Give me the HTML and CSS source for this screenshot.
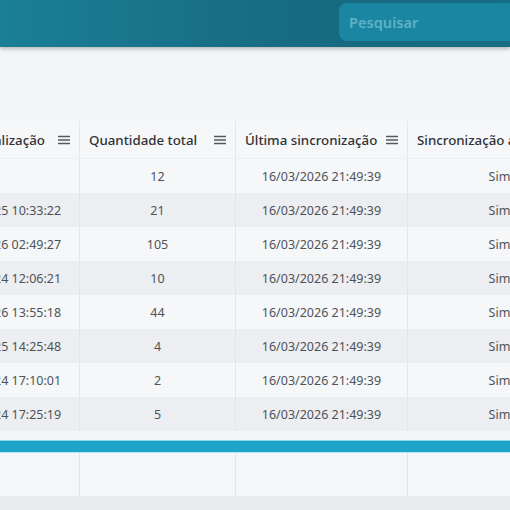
FILE: index.html
```html
<!DOCTYPE html>
<html lang="pt-BR">
<head>
<meta charset="utf-8">
<link rel="stylesheet" href="styles.css">
</head>
<body>
<header class="topbar">
  <div class="search"><span class="placeholder">Pesquisar</span></div>
</header>
<main class="content">
  <div class="grid">
    <div class="row head">
      <div class="hcell hcell-end"><span>Última atualização</span><svg class="menu" viewBox="0 0 14 10"><path d="M1 1.5H13M1 5H13M1 8.5H13"/></svg></div>
      <div class="hcell"><span>Quantidade total</span><svg class="menu" viewBox="0 0 14 10"><path d="M1 1.5H13M1 5H13M1 8.5H13"/></svg></div>
      <div class="hcell"><span>Última sincronização</span><svg class="menu" viewBox="0 0 14 10"><path d="M1 1.5H13M1 5H13M1 8.5H13"/></svg></div>
      <div class="hcell"><span>Sincronização ativa</span><svg class="menu" viewBox="0 0 14 10"><path d="M1 1.5H13M1 5H13M1 8.5H13"/></svg></div>
    </div>
    <div class="row odd"><div class="cell"></div><div class="cell">12</div><div class="cell">16/03/2026 21:49:39</div><div class="cell">Sim</div></div>
    <div class="row even"><div class="cell">12/08/2025 10:33:22</div><div class="cell">21</div><div class="cell">16/03/2026 21:49:39</div><div class="cell">Sim</div></div>
    <div class="row odd"><div class="cell">14/03/2026 02:49:27</div><div class="cell">105</div><div class="cell">16/03/2026 21:49:39</div><div class="cell">Sim</div></div>
    <div class="row even"><div class="cell">21/11/2024 12:06:21</div><div class="cell">10</div><div class="cell">16/03/2026 21:49:39</div><div class="cell">Sim</div></div>
    <div class="row odd"><div class="cell">02/02/2026 13:55:18</div><div class="cell">44</div><div class="cell">16/03/2026 21:49:39</div><div class="cell">Sim</div></div>
    <div class="row even"><div class="cell">19/06/2025 14:25:48</div><div class="cell">4</div><div class="cell">16/03/2026 21:49:39</div><div class="cell">Sim</div></div>
    <div class="row odd"><div class="cell">08/10/2024 17:10:01</div><div class="cell">2</div><div class="cell">16/03/2026 21:49:39</div><div class="cell">Sim</div></div>
    <div class="row even"><div class="cell">27/09/2024 17:25:19</div><div class="cell">5</div><div class="cell">16/03/2026 21:49:39</div><div class="cell">Sim</div></div>
    <div class="spacer"></div>
    <div class="scrollbar"></div>
    <div class="row foot"><div class="cell"></div><div class="cell"></div><div class="cell"></div><div class="cell"></div></div>
  </div>
</main>
</body>
</html>
```
FILE: styles.css
```css
html, body {
  margin: 0;
  padding: 0;
  height: 100%;
  overflow: hidden;
  background: #e9ebed;
  font-family: "Noto Sans", "Open Sans", sans-serif;
}
.topbar {
  height: 47px;
  background: linear-gradient(90deg, #1b7f96 0%, #176d84 50%, #166a80 70%, #176d84 100%);
  box-shadow: 0 2px 4px rgba(0,0,0,0.25);
  display: flex;
  justify-content: flex-end;
  align-items: center;
  position: relative;
  z-index: 2;
}
.search {
  width: 190px;
  margin-right: -19px;
  height: 38px;
  margin-top: -4px;
  background: #1a86a2;
  border-radius: 8px;
  display: flex;
  align-items: center;
  padding-left: 10px;
  box-sizing: border-box;
}
.placeholder {
  color: #5fb1c7;
  font-weight: 600;
  font-size: 14.6px;
}
.content {
  background: #f3f5f6;
  padding-top: 74px;
  height: 449px;
  box-sizing: border-box;
}
.grid {
  margin-left: -76px;
  width: 668px;
}
.row {
  display: grid;
  grid-template-columns: 156px 156px 172px 184px;
}
.head {
  height: 38px;
  background: #f6f7f9;
  border-bottom: 1px solid #eceef0;
  box-sizing: border-box;
}
.hcell {
  display: flex;
  align-items: center;
  justify-content: space-between;
  padding: 0 8px 0 9px;
  border-right: 1px solid #e4e6e9;
  font-size: 13.3px;
  font-weight: 500;
  color: #2f3236;
  white-space: nowrap;
  overflow: hidden;
}
.hcell-end {
  justify-content: flex-end;
  gap: 4px;
}
.menu {
  width: 14px;
  height: 10px;
  flex: none;
  margin-left: 8px;
  fill: none;
  stroke: #55595e;
  stroke-width: 1.5;
}
.row.odd, .row.even { height: 34px; }
.odd { background: #f5f7f9; }
.even { background: #eceef1; }
.cell {
  display: flex;
  align-items: center;
  justify-content: center;
  border-right: 1px solid #e3e5e8;
  font-size: 12.5px;
  color: #4f5358;
  white-space: nowrap;
}
.spacer {
  height: 9px;
  background: #f3f6f8;
}
.scrollbar {
  height: 11px;
  background: #1ea4c8;
  border-top: 1px solid #8fd8ea;
  border-bottom: 1px solid #b6e6f1;
}
.row.foot {
  height: 43px;
  background: #f4f6f8;
}
```
